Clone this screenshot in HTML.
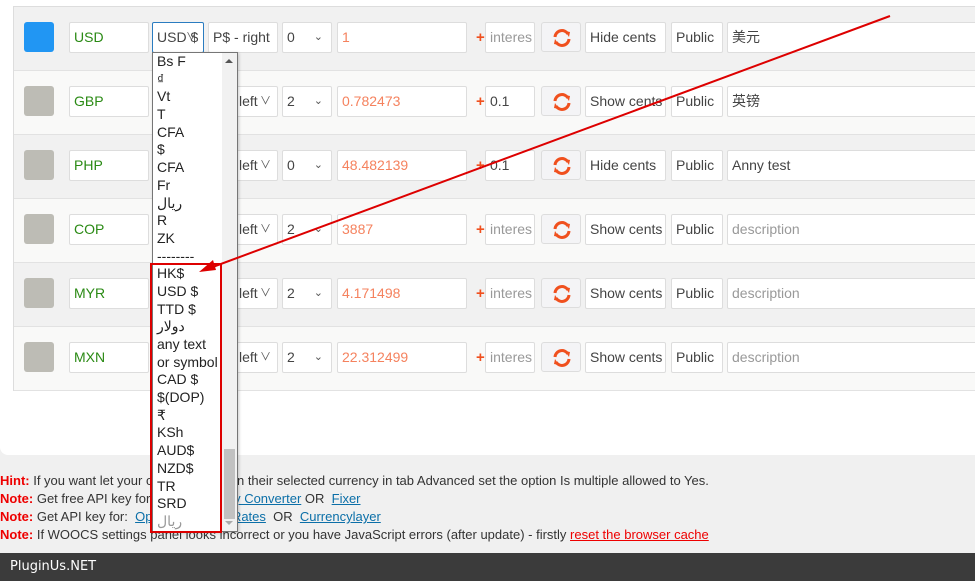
<!DOCTYPE html>
<html><head><meta charset="utf-8">
<style>
*{box-sizing:border-box;margin:0;padding:0}
body{width:975px;height:581px;overflow:hidden;background:#f0f0f0;font-family:"Liberation Sans","Noto Sans CJK SC",sans-serif;font-size:14px;color:#444;position:relative}
.panel{position:absolute;left:0;top:0;width:975px;height:455px;background:#fff;border-bottom-left-radius:8px}
.tbl{position:absolute;left:13px;top:6px;width:970px;height:385px;border:1px solid #ddd;border-right:none}
.row{position:absolute;left:0;width:100%;height:64px;border-bottom:1px solid #e2e2e2}
.b{position:absolute;height:31px;top:15px;background:#fff;border:1px solid #ddd;border-radius:2px;line-height:29px;padding-left:4px;white-space:nowrap;overflow:hidden;font-size:14px}
.sw{position:absolute;left:10px;top:15px;width:30px;height:30px;border-radius:3px;background:#bdbcb5}
.g{color:#2a8a14}
.o{color:#f5825e}
.ph{color:#999}
.chev{position:absolute;right:6px;top:0;font-size:11px;color:#555}
.plus{position:absolute;left:462px;top:22px;color:#f0501e;font-weight:bold;font-size:15px}
.ref{position:absolute;left:527px;top:15px;width:40px;height:30px;background:#f4f4f6;border:1px solid #ddd;border-radius:3px}
.ref svg{position:absolute;left:10px;top:5px}
.dd{position:absolute;left:152px;top:52px;width:86px;height:480px;background:#fff;border:1px solid #767676;box-shadow:1px 1px 3px rgba(0,0,0,.2);z-index:5;overflow:hidden}
.dd .it{height:17.7px;line-height:17.7px;padding-left:4px;color:#222;font-size:14px;white-space:nowrap;overflow:hidden}
.sb{position:absolute;right:0;top:0;width:15px;height:100%;background:#f1f1f1}
.thumb{position:absolute;right:2px;top:396px;width:11px;height:70px;background:#c1c1c1}
.hl{position:absolute;left:150px;top:263px;width:72px;height:270px;border:2px solid #d00;z-index:6}
.arrow{position:absolute;left:0;top:0;z-index:7}
.hint{position:absolute;left:0;top:472px;font-size:13px;line-height:18px;color:#333;white-space:nowrap}
.hint b{color:#e00;font-weight:bold}
.hint a{color:#0b6fa8;text-decoration:underline}
.foot{position:absolute;left:0;top:553px;width:975px;height:28px;background:#3b3b3b;color:#fff;font-family:"DejaVu Sans",sans-serif;font-size:13px;line-height:28px;padding-left:10px}
</style></head><body>
<div class="panel"></div>
<div class="tbl">
<div class="row" style="top:0;background:#f1f1f1">
 <div class="sw" style="background:#2196f3"></div>
 <div class="b g" style="left:55px;width:80px">USD</div>
 <div class="b" style="left:138px;width:52px;border-color:#2a7cc0">USD $<span class="chev">&#8744;</span></div>
 <div class="b" style="left:194px;width:70px">P$ - right</div>
 <div class="b" style="left:268px;width:50px">0<span class="chev" style="right:8px">&#8964;</span></div>
 <div class="b o" style="left:323px;width:130px">1</div>
 <div class="plus">+</div>
 <div class="b ph" style="left:471px;width:50px">interes</div>
 <div class="ref"><svg width="20" height="20" viewBox="0 0 20 20"><path d="M3 9a7 7 0 0 1 13-3" fill="none" stroke="#f0501e" stroke-width="3"/><path d="M17 11a7 7 0 0 1-13 3" fill="none" stroke="#f0501e" stroke-width="3"/><path d="M13 3l5 1-1 5z" fill="#f0501e"/><path d="M7 17l-5-1 1-5z" fill="#f0501e"/></svg></div>
 <div class="b" style="left:571px;width:81px">Hide cents</div>
 <div class="b" style="left:657px;width:52px">Public</div>
 <div class="b" style="left:713px;width:260px">美元</div>
</div>
<div class="row" style="top:64px;background:#f9f9f8">
 <div class="sw"></div>
 <div class="b g" style="left:55px;width:80px">GBP</div>
 <div class="b" style="left:194px;width:70px;padding-left:30px">left<span class="chev">&#8744;</span></div>
 <div class="b" style="left:268px;width:50px">2<span class="chev" style="right:8px">&#8964;</span></div>
 <div class="b o" style="left:323px;width:130px">0.782473</div>
 <div class="plus">+</div>
 <div class="b" style="left:471px;width:50px">0.1</div>
 <div class="ref"><svg width="20" height="20" viewBox="0 0 20 20"><path d="M3 9a7 7 0 0 1 13-3" fill="none" stroke="#f0501e" stroke-width="3"/><path d="M17 11a7 7 0 0 1-13 3" fill="none" stroke="#f0501e" stroke-width="3"/><path d="M13 3l5 1-1 5z" fill="#f0501e"/><path d="M7 17l-5-1 1-5z" fill="#f0501e"/></svg></div>
 <div class="b" style="left:571px;width:81px">Show cents</div>
 <div class="b" style="left:657px;width:52px">Public</div>
 <div class="b" style="left:713px;width:260px">英镑</div>
</div>
<div class="row" style="top:128px;background:#f1f1f1">
 <div class="sw"></div>
 <div class="b g" style="left:55px;width:80px">PHP</div>
 <div class="b" style="left:194px;width:70px;padding-left:30px">left<span class="chev">&#8744;</span></div>
 <div class="b" style="left:268px;width:50px">0<span class="chev" style="right:8px">&#8964;</span></div>
 <div class="b o" style="left:323px;width:130px">48.482139</div>
 <div class="plus">+</div>
 <div class="b" style="left:471px;width:50px">0.1</div>
 <div class="ref"><svg width="20" height="20" viewBox="0 0 20 20"><path d="M3 9a7 7 0 0 1 13-3" fill="none" stroke="#f0501e" stroke-width="3"/><path d="M17 11a7 7 0 0 1-13 3" fill="none" stroke="#f0501e" stroke-width="3"/><path d="M13 3l5 1-1 5z" fill="#f0501e"/><path d="M7 17l-5-1 1-5z" fill="#f0501e"/></svg></div>
 <div class="b" style="left:571px;width:81px">Hide cents</div>
 <div class="b" style="left:657px;width:52px">Public</div>
 <div class="b" style="left:713px;width:260px">Anny test</div>
</div>
<div class="row" style="top:192px;background:#f9f9f8">
 <div class="sw"></div>
 <div class="b g" style="left:55px;width:80px">COP</div>
 <div class="b" style="left:194px;width:70px;padding-left:30px">left<span class="chev">&#8744;</span></div>
 <div class="b" style="left:268px;width:50px">2<span class="chev" style="right:8px">&#8964;</span></div>
 <div class="b o" style="left:323px;width:130px">3887</div>
 <div class="plus">+</div>
 <div class="b ph" style="left:471px;width:50px">interes</div>
 <div class="ref"><svg width="20" height="20" viewBox="0 0 20 20"><path d="M3 9a7 7 0 0 1 13-3" fill="none" stroke="#f0501e" stroke-width="3"/><path d="M17 11a7 7 0 0 1-13 3" fill="none" stroke="#f0501e" stroke-width="3"/><path d="M13 3l5 1-1 5z" fill="#f0501e"/><path d="M7 17l-5-1 1-5z" fill="#f0501e"/></svg></div>
 <div class="b" style="left:571px;width:81px">Show cents</div>
 <div class="b" style="left:657px;width:52px">Public</div>
 <div class="b ph" style="left:713px;width:260px">description</div>
</div>
<div class="row" style="top:256px;background:#f1f1f1">
 <div class="sw"></div>
 <div class="b g" style="left:55px;width:80px">MYR</div>
 <div class="b" style="left:194px;width:70px;padding-left:30px">left<span class="chev">&#8744;</span></div>
 <div class="b" style="left:268px;width:50px">2<span class="chev" style="right:8px">&#8964;</span></div>
 <div class="b o" style="left:323px;width:130px">4.171498</div>
 <div class="plus">+</div>
 <div class="b ph" style="left:471px;width:50px">interes</div>
 <div class="ref"><svg width="20" height="20" viewBox="0 0 20 20"><path d="M3 9a7 7 0 0 1 13-3" fill="none" stroke="#f0501e" stroke-width="3"/><path d="M17 11a7 7 0 0 1-13 3" fill="none" stroke="#f0501e" stroke-width="3"/><path d="M13 3l5 1-1 5z" fill="#f0501e"/><path d="M7 17l-5-1 1-5z" fill="#f0501e"/></svg></div>
 <div class="b" style="left:571px;width:81px">Show cents</div>
 <div class="b" style="left:657px;width:52px">Public</div>
 <div class="b ph" style="left:713px;width:260px">description</div>
</div>
<div class="row" style="top:320px;background:#f9f9f8">
 <div class="sw"></div>
 <div class="b g" style="left:55px;width:80px">MXN</div>
 <div class="b" style="left:194px;width:70px;padding-left:30px">left<span class="chev">&#8744;</span></div>
 <div class="b" style="left:268px;width:50px">2<span class="chev" style="right:8px">&#8964;</span></div>
 <div class="b o" style="left:323px;width:130px">22.312499</div>
 <div class="plus">+</div>
 <div class="b ph" style="left:471px;width:50px">interes</div>
 <div class="ref"><svg width="20" height="20" viewBox="0 0 20 20"><path d="M3 9a7 7 0 0 1 13-3" fill="none" stroke="#f0501e" stroke-width="3"/><path d="M17 11a7 7 0 0 1-13 3" fill="none" stroke="#f0501e" stroke-width="3"/><path d="M13 3l5 1-1 5z" fill="#f0501e"/><path d="M7 17l-5-1 1-5z" fill="#f0501e"/></svg></div>
 <div class="b" style="left:571px;width:81px">Show cents</div>
 <div class="b" style="left:657px;width:52px">Public</div>
 <div class="b ph" style="left:713px;width:260px">description</div>
</div>
</div>

<div class="hint">
<div><b>Hint:</b> If you want let your customers pay in their selected currency in tab Advanced set the option Is multiple allowed to Yes.</div>
<div><b>Note:</b> Get free API key for: <a>Free Currency Converter</a> OR &nbsp;<a>Fixer</a></div>
<div><b>Note:</b> Get API key for: &nbsp;<a>Open Exchange Rates</a> &nbsp;OR &nbsp;<a>Currencylayer</a></div>
<div><b>Note:</b> If WOOCS settings panel looks incorrect or you have JavaScript errors (after update) - firstly <a style="color:#e00">reset the browser cache</a></div>
</div>

<div class="dd">
 <div class="sb"><div style="position:absolute;left:3px;top:6px;width:0;height:0;border:4px solid transparent;border-bottom-color:#555;border-top:none"></div><div class="thumb"></div><div style="position:absolute;left:3px;bottom:6px;width:0;height:0;border:4px solid transparent;border-top-color:#aaa;border-bottom:none"></div></div>
 <div class="it">Bs F</div><div class="it">₫</div><div class="it">Vt</div><div class="it">T</div><div class="it">CFA</div><div class="it">$</div><div class="it">CFA</div><div class="it">Fr</div><div class="it">ریال</div><div class="it">R</div><div class="it">ZK</div><div class="it">--------</div><div class="it">HK$</div><div class="it">USD $</div><div class="it">TTD $</div><div class="it">دولار</div><div class="it">any text</div><div class="it">or symbol</div><div class="it">CAD $</div><div class="it">$(DOP)</div><div class="it">₹</div><div class="it">KSh</div><div class="it">AUD$</div><div class="it">NZD$</div><div class="it">TR</div><div class="it">SRD</div><div class="it" style="color:#999">ریال</div>
</div>
<div class="hl"></div>
<svg class="arrow" width="975" height="581"><line x1="890" y1="16" x2="210" y2="268" stroke="#d00" stroke-width="2"/><path d="M199 272l14-12 3 10z" fill="#d00"/></svg>

<div class="foot">PluginUs.NET</div>
</body></html>
